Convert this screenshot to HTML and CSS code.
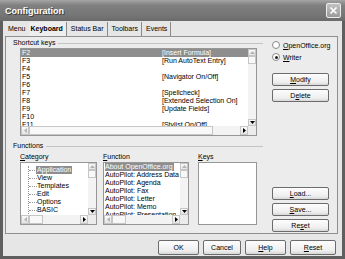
FILE: index.html
```html
<!DOCTYPE html>
<html lang="en">
<head>
    <meta charset="UTF-8">
    <title>Configuration</title>
    <link rel="stylesheet" href="styles.css">
</head>
<body>
<div class="window">
    <!-- Title bar -->
    <div class="titlebar">
        <span class="title">Configuration</span>
        <span class="close">
            <svg width="9" height="9" viewBox="0 0 9 9"><path d="M1.5 1.5L7.5 7.5M7.5 1.5L1.5 7.5" stroke="#fff" stroke-width="1.6"/></svg>
        </span>
    </div>

    <div class="frame">
        <div class="client">
            <!-- Tabs -->
            <div class="tabs">
                <span class="tab first">Menu</span>
                <span class="tab active">Keyboard</span>
                <span class="tab">Status Bar</span>
                <span class="tab">Toolbars</span>
                <span class="tab">Events</span>
            </div>

            <div class="panel">
                <div class="main">
                    <div class="group-title"><span>Shortcut keys</span></div>
                    <div class="listbox shortcuts">
                        <div class="items">
                            <div class="row sel"><span class="key">F2</span><span>[Insert Formula]</span></div>
                            <div class="row"><span class="key">F3</span><span>[Run AutoText Entry]</span></div>
                            <div class="row"><span class="key">F4</span><span></span></div>
                            <div class="row"><span class="key">F5</span><span>[Navigator On/Off]</span></div>
                            <div class="row"><span class="key">F6</span><span></span></div>
                            <div class="row"><span class="key">F7</span><span>[Spellcheck]</span></div>
                            <div class="row"><span class="key">F8</span><span>[Extended Selection On]</span></div>
                            <div class="row"><span class="key">F9</span><span>[Update Fields]</span></div>
                            <div class="row"><span class="key">F10</span><span></span></div>
                            <div class="row"><span class="key">F11</span><span>[Stylist On/Off]</span></div>
                        </div>
                        <div class="vscroll">
                            <span class="arrow off"><svg width="5" height="3"><path d="M0 3h5L2.5 0z"/></svg></span>
                            <span class="vthumb"></span>
                            <span class="track"></span>
                            <span class="arrow"><svg width="5" height="3"><path d="M0 0h5L2.5 3z"/></svg></span>
                        </div>
                        <div class="hscroll">
                            <span class="arrow off"><svg width="3" height="5"><path d="M3 0v5L0 2.5z"/></svg></span>
                            <span class="hthumb wide"></span>
                            <span class="track"></span>
                            <span class="arrow"><svg width="3" height="5"><path d="M0 0v5L3 2.5z"/></svg></span>
                        </div>
                        <div class="corner"></div>
                    </div>

                    <div class="group-title functions"><span>Functions</span></div>
                    <div class="func-cols">
                        <div class="col category">
                            <div class="label"><u>C</u>ategory</div>
                            <div class="listbox">
                                <div class="items">
                                    <div class="tree">
                                        <div class="row"><span class="twig"></span><span class="sel">Application</span></div>
                                        <div class="row"><span class="twig"></span><span>View</span></div>
                                        <div class="row"><span class="twig"></span><span>Templates</span></div>
                                        <div class="row"><span class="twig"></span><span>Edit</span></div>
                                        <div class="row"><span class="twig"></span><span>Options</span></div>
                                        <div class="row"><span class="twig"></span><span>BASIC</span></div>
                                        <div class="row"><span class="twig"></span><span>Documents</span></div>
                                    </div>
                                </div>
                                <div class="vscroll">
                                    <span class="arrow off"><svg width="5" height="3"><path d="M0 3h5L2.5 0z"/></svg></span>
                                    <span class="vthumb"></span>
                                    <span class="track"></span>
                                    <span class="arrow"><svg width="5" height="3"><path d="M0 0h5L2.5 3z"/></svg></span>
                                </div>
                                <div class="hscroll">
                                    <span class="arrow off"><svg width="3" height="5"><path d="M3 0v5L0 2.5z"/></svg></span>
                                    <span class="hthumb"></span>
                                    <span class="track"></span>
                                    <span class="arrow"><svg width="3" height="5"><path d="M0 0v5L3 2.5z"/></svg></span>
                                </div>
                                <div class="corner"></div>
                            </div>
                        </div>
                        <div class="col function">
                            <div class="label"><u>F</u>unction</div>
                            <div class="listbox">
                                <div class="items plain">
                                    <div class="row"><span class="sel">About OpenOffice.org</span></div>
                                    <div class="row">AutoPilot: Address Data Source</div>
                                    <div class="row">AutoPilot: Agenda</div>
                                    <div class="row">AutoPilot: Fax</div>
                                    <div class="row">AutoPilot: Letter</div>
                                    <div class="row">AutoPilot: Memo</div>
                                    <div class="row">AutoPilot: Presentation</div>
                                </div>
                                <div class="vscroll">
                                    <span class="arrow off"><svg width="5" height="3"><path d="M0 3h5L2.5 0z"/></svg></span>
                                    <span class="vthumb"></span>
                                    <span class="track"></span>
                                    <span class="arrow"><svg width="5" height="3"><path d="M0 0h5L2.5 3z"/></svg></span>
                                </div>
                                <div class="hscroll">
                                    <span class="arrow off"><svg width="3" height="5"><path d="M3 0v5L0 2.5z"/></svg></span>
                                    <span class="hthumb"></span>
                                    <span class="track"></span>
                                    <span class="arrow"><svg width="3" height="5"><path d="M0 0v5L3 2.5z"/></svg></span>
                                </div>
                                <div class="corner"></div>
                            </div>
                        </div>
                        <div class="col keys">
                            <div class="label"><u>K</u>eys</div>
                            <div class="listbox empty"></div>
                        </div>
                    </div>
                </div>

                <!-- Right side controls -->
                <div class="side">
                    <label class="radio first"><span class="dot"></span><span><u>O</u>penOffice.org</span></label>
                    <label class="radio"><span class="dot on"></span><span><u>W</u>riter</span></label>
                    <span class="btn modify"><u>M</u>odify</span>
                    <span class="btn">D<u>e</u>lete</span>
                    <span class="btn load"><u>L</u>oad...</span>
                    <span class="btn"><u>S</u>ave...</span>
                    <span class="btn">Re<u>s</u>et</span>
                </div>
            </div>

            <!-- Dialog buttons -->
            <div class="footer">
                <span class="btn ok">OK</span>
                <span class="btn cancel">Cancel</span>
                <span class="btn help"><u>H</u>elp</span>
                <span class="btn reset"><u>R</u>eset</span>
            </div>
        </div>
    </div>
</div>
</body>
</html>
```

FILE: styles.css
```css
/* Reset */
body {
    margin: 0;
    font-family: "Liberation Sans", Arial, sans-serif;
    font-size: 7px;
    color: #000;
    background: #fff;
}

u {
    text-decoration-thickness: 1px;
}

/* Window frame */
.window {
    width: 345px;
    height: 259px;
    display: flex;
    flex-direction: column;
    background: #5f5f5f;
}

.titlebar {
    height: 21px;
    box-sizing: border-box;
    display: flex;
    align-items: center;
    justify-content: space-between;
    padding: 0 4px 0 5px;
    background: linear-gradient(#a6a6a6, #808080 25%, #767676 70%, #6a6a6a);
}

.title {
    color: #fff;
    font-size: 9px;
    font-weight: bold;
    text-shadow: 1px 1px 0 #3c3c3c;
}

.close {
    width: 15px;
    height: 15px;
    box-sizing: border-box;
    border: 1px solid #ececec;
    border-radius: 2px;
    background: linear-gradient(#c2c2c2, #9a9a9a);
    display: flex;
    align-items: center;
    justify-content: center;
}

.frame {
    flex: 1;
    display: flex;
    padding: 0 3px 3px;
}

.client {
    flex: 1;
    display: flex;
    flex-direction: column;
    background: #e6e6e6;
    padding: 1px 4px 0 2px;
}

/* Tabs */
.tabs {
    display: flex;
    height: 14px;
}

.tab {
    line-height: 14px;
    padding: 0 3px 0 4px;
    border-right: 1px solid #8a8a8a;
}

.tab.first {
    padding-left: 3px;
    border-right: none;
}

.tab.active {
    font-weight: bold;
    padding-left: 2px;
    background: #eeeeee;
}

.panel {
    height: 198px;
    box-sizing: border-box;
    border: 1px solid #8f8f8f;
    background: #ececec;
    display: flex;
    padding: 2px 0 0 7px;
}

.main {
    width: 250px;
}

.group-title {
    display: flex;
    align-items: center;
    height: 8px;
    line-height: 8px;
}

.group-title span {
    padding-right: 3px;
}

.group-title::after {
    content: "";
    flex: 1;
    border-top: 1px solid #c4c4c4;
}

.group-title.functions {
    margin-top: 6px;
}

/* List boxes */
.listbox {
    box-sizing: border-box;
    border: 1px solid #979797;
    background: #fff;
    display: grid;
    grid-template-columns: 1fr 8px;
    grid-template-rows: 1fr 9px;
    overflow: hidden;
}

.listbox.shortcuts {
    width: 237px;
    height: 88px;
    margin: 1px 0 0 7px;
}

.items {
    overflow: hidden;
    white-space: nowrap;
}

.row {
    height: 8px;
    line-height: 8px;
    display: flex;
}

.shortcuts .row {
    padding-left: 1px;
}

.key {
    width: 140px;
}

.row.sel,
.sel {
    background: #8e8e8e;
    color: #fff;
}

.plain .row {
    padding-left: 1px;
}

.plain .sel {
    padding: 0 1px 0 0;
}

.tree {
    margin: 3px 0 0 7px;
    border-left: 1px dotted #9a9a9a;
}

.tree .row {
    align-items: center;
}

.twig {
    width: 8px;
    border-top: 1px dotted #9a9a9a;
}

.tree .sel {
    padding: 0 1px;
    margin-left: -1px;
}

.vscroll {
    display: flex;
    flex-direction: column;
    background: #f3f3f3;
}

.hscroll {
    display: flex;
    background: #f3f3f3;
}

.arrow {
    flex: none;
    width: 8px;
    height: 7px;
    box-sizing: border-box;
    border: 1px solid #c6c6c6;
    background: linear-gradient(#fbfbfb, #e4e4e4);
    display: flex;
    align-items: center;
    justify-content: center;
}

.hscroll .arrow {
    height: 9px;
}

.arrow.off svg {
    fill: #b4b4b4;
}

.vthumb {
    height: 6px;
    border: 1px solid #c6c6c6;
    background: #f8f8f8;
}

.hthumb {
    width: 12px;
    border: 1px solid #c6c6c6;
    background: #f8f8f8;
}

.hthumb.wide {
    width: 182px;
}

.track {
    flex: 1;
}

.corner {
    background: #ececec;
}

/* Functions */
.func-cols {
    display: flex;
    margin-top: 3px;
    padding-left: 7px;
}

.label {
    height: 9px;
    line-height: 8px;
}

.col.category {
    width: 77px;
}

.col.function {
    width: 86px;
    margin-left: 6px;
}

.col.keys {
    width: 59px;
    margin-left: 9px;
}

.col .listbox {
    height: 63px;
}

.listbox.empty {
    display: block;
}

/* Side controls */
.side {
    flex: 1;
    display: flex;
    flex-direction: column;
    padding: 0 0 1px 9px;
}

.radio {
    display: flex;
    align-items: center;
    height: 10px;
    margin-top: 2px;
}

.radio.first {
    margin-top: 1px;
}

.dot {
    width: 8px;
    height: 8px;
    box-sizing: border-box;
    border: 1px solid #8a8a8a;
    border-radius: 50%;
    background: #fff;
    margin-right: 3px;
    display: flex;
    align-items: center;
    justify-content: center;
}

.dot.on::after {
    content: "";
    width: 3px;
    height: 3px;
    border-radius: 50%;
    background: #222;
}

.btn {
    box-sizing: border-box;
    width: 57px;
    height: 13px;
    border: 1px solid #6c6c6c;
    border-radius: 2px;
    background: linear-gradient(#fdfdfd, #eeeeee 75%, #d6d6d6);
    display: flex;
    align-items: center;
    justify-content: center;
    margin-top: 3px;
}

.btn.modify {
    margin-top: 11px;
}

.btn.load {
    margin-top: auto;
}

/* Footer */
.footer {
    flex: 1;
    display: flex;
    justify-content: flex-end;
    align-items: flex-start;
    gap: 4px;
    padding: 6px 2px 0 0;
}

.footer .btn {
    height: 15px;
    margin-top: 0;
}

.btn.ok { width: 41px; }
.btn.cancel { width: 38px; }
.btn.help { width: 41px; }
.btn.reset { width: 46px; }
```
